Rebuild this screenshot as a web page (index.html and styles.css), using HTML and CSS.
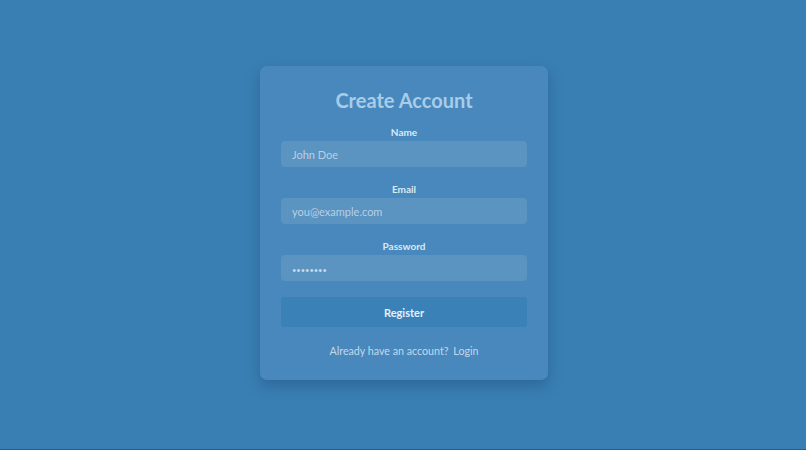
FILE: index.html
```html
<!DOCTYPE html>
<html lang="en">
<head>
<meta charset="utf-8">
<title>Create Account</title>
<link rel="stylesheet" href="styles.css">
</head>
<body>
<main class="page">
  <form class="card">
    <h1 class="title">Create Account</h1>
    <div class="field">
      <label class="label" for="name">Name</label>
      <input class="input" id="name" type="text" placeholder="John Doe">
    </div>
    <div class="field">
      <label class="label" for="email">Email</label>
      <input class="input" id="email" type="email" placeholder="you@example.com">
    </div>
    <div class="field">
      <label class="label" for="password">Password</label>
      <input class="input input-secret" id="password" type="password" placeholder="••••••••">
    </div>
    <button class="button" type="button">Register</button>
    <p class="footer">Already have an account? <a class="link" href="#">Login</a></p>
  </form>
</main>
</body>
</html>
```

FILE: styles.css
```css
* { box-sizing: border-box; }
html, body { margin: 0; padding: 0; }
body {
  background: #3a7fb3;
  font-family: "Lato", "Open Sans", sans-serif;
  height: 450px;
  border-bottom: 1px solid #2a5a80;
}
.page {
  height: 449px;
  display: flex;
  align-items: center;
  justify-content: center;
}
.card {
  width: 288px;
  margin-left: 2px;
  margin-bottom: 3px;
  background: #4888bc;
  border-radius: 7px;
  padding: 20px 21px 21px;
  box-shadow: 0 6px 14px rgba(20, 60, 100, 0.35);
  display: flex;
  flex-direction: column;
}
.title {
  margin: 0 0 11px;
  font-size: 20px;
  line-height: 28px;
  font-weight: 700;
  text-align: center;
  color: #a9cce8;
}
.field {
  display: flex;
  flex-direction: column;
  gap: 2px;
  margin-bottom: 15px;
}
.field:last-of-type { margin-bottom: 16px; }
.label {
  font-size: 10px;
  line-height: 14px;
  font-weight: 700;
  text-align: center;
  color: #dbe8f3;
}
.input {
  height: 26px;
  border: none;
  border-radius: 4px;
  background: #5b94c1;
  padding: 0 11px;
  font-family: inherit;
  font-size: 11px;
  color: #dbe8f3;
  outline: none;
}
.input::placeholder { color: #b7d0e4; }
.input-secret::placeholder {
  font-size: 7.5px;
  color: #c8dcec;
}
.button {
  height: 30px;
  border: none;
  border-radius: 4px;
  background: #3a81b8;
  color: #e6f0f8;
  font-family: inherit;
  font-size: 11px;
  font-weight: 700;
  margin-bottom: 16px;
}
.footer {
  margin: 0;
  font-size: 10.7px;
  line-height: 16px;
  text-align: center;
  color: #c2d9ec;
}
.link {
  color: #c2d9ec;
  text-decoration: none;
  margin-left: 2px;
}
```
